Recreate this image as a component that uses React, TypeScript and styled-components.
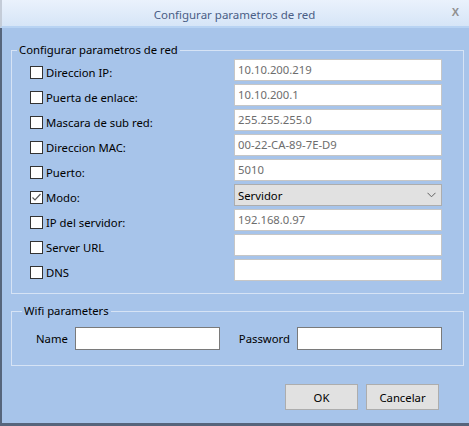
import React from "react";
import styled, { createGlobalStyle } from "styled-components";

const GlobalStyle = createGlobalStyle`
  html, body {
    margin: 0;
    padding: 0;
    background: #a7c4ea;
  }
  body {
    font-family: "Noto Sans", "Open Sans", sans-serif;
    font-size: 11.3px;
  }
`;

interface NetRow {
  label: string;
  value: string;
  checked?: boolean;
  select?: boolean;
}

const rows: NetRow[] = [
  { label: "Direccion IP:", value: "10.10.200.219" },
  { label: "Puerta de enlace:", value: "10.10.200.1" },
  { label: "Mascara de sub red:", value: "255.255.255.0" },
  { label: "Direccion MAC:", value: "00-22-CA-89-7E-D9" },
  { label: "Puerto:", value: "5010" },
  { label: "Modo:", value: "Servidor", checked: true, select: true },
  { label: "IP del servidor:", value: "192.168.0.97" },
  { label: "Server URL", value: "" },
  { label: "DNS", value: "" },
];

const CheckBox: React.FC<{ checked?: boolean }> = ({ checked }) => (
  <StyledCheck>
    {checked && (
      <svg width="11" height="11" viewBox="0 0 11 11">
        <polyline points="1.5,5.5 4,8 9.5,2" fill="none" stroke="#5a5a5a" strokeWidth="1.2" />
      </svg>
    )}
  </StyledCheck>
);

const App: React.FC = () => {
  return (
    <>
      <GlobalStyle />
      <StyledWindow>
        <StyledTitleBar>
          <StyledTitle>Configurar parametros de red</StyledTitle>
          <StyledClose>X</StyledClose>
        </StyledTitleBar>
        <StyledBody>
          <StyledGroup>
            <StyledLegend>Configurar parametros de red</StyledLegend>
            <StyledGrid>
              {rows.map((r) => (
                <React.Fragment key={r.label}>
                  <StyledOption>
                    <CheckBox checked={r.checked} />
                    <span>{r.label}</span>
                  </StyledOption>
                  {r.select ? (
                    <StyledSelect>
                      <span>{r.value}</span>
                      <svg width="9" height="6" viewBox="0 0 9 6">
                        <polyline points="0.5,0.8 4.5,4.8 8.5,0.8" fill="none" stroke="#606060" strokeWidth="1" />
                      </svg>
                    </StyledSelect>
                  ) : (
                    <StyledField>{r.value}</StyledField>
                  )}
                </React.Fragment>
              ))}
            </StyledGrid>
          </StyledGroup>

          <StyledWifiGroup>
            <StyledLegend>Wifi parameters</StyledLegend>
            <StyledWifiRow>
              <StyledWifiLabel>Name</StyledWifiLabel>
              <StyledWifiInput />
              <StyledWifiLabel $gap>Password</StyledWifiLabel>
              <StyledWifiInput />
            </StyledWifiRow>
          </StyledWifiGroup>

          <StyledButtons>
            <StyledButton>OK</StyledButton>
            <StyledButton>Cancelar</StyledButton>
          </StyledButtons>
        </StyledBody>
      </StyledWindow>
    </>
  );
};

const StyledWindow = styled.div`
  width: 469px;
  height: 426px;
  box-sizing: border-box;
  display: flex;
  flex-direction: column;
  background: #a7c4ea;
  border-bottom: 3px solid #56657c;
  overflow: hidden;
`;

const StyledTitleBar = styled.div`
  height: 26px;
  flex: none;
  display: flex;
  align-items: center;
  justify-content: center;
  position: relative;
  background: linear-gradient(#eaf2fc, #d6e5f7);
  border-left: 2px solid #c4ccd8;
  border-bottom: 2px solid #b8d3f3;
`;

const StyledTitle = styled.div`
  color: #4a5e86;
  font-size: 11.5px;
  margin-left: -2px;
  margin-top: 2px;
`;

const StyledClose = styled.div`
  position: absolute;
  right: 10px;
  top: 6px;
  color: #909090;
  font-family: "Liberation Sans", sans-serif;
  font-size: 11px;
  font-weight: bold;
`;

const StyledBody = styled.div`
  flex: 1;
  display: flex;
  flex-direction: column;
  border-left: 2px solid #56657c;
  padding: 14px 5px 0 9px;
`;

const StyledGroup = styled.fieldset`
  margin: 0;
  padding: 1px 21px 12px 19px;
  border: 1px solid #d6e3f5;
  min-width: 0;
`;

const StyledLegend = styled.legend`
  margin-left: -14px;
  padding: 0 2px;
  line-height: 16px;
  color: #000;
`;

const StyledGrid = styled.div`
  display: grid;
  grid-template-columns: 1fr 208px;
  row-gap: 3px;
`;

const StyledOption = styled.div`
  display: flex;
  align-items: center;
  gap: 3px;
  padding-top: 4px;
  margin-left: -1px;
  color: #000;
`;

const StyledCheck = styled.div`
  width: 11px;
  height: 11px;
  flex: none;
  border: 1px solid #333;
  background: #fff;
  display: flex;
`;

const StyledField = styled.div`
  height: 22px;
  box-sizing: border-box;
  border: 1px solid #c6c6c6;
  background: #fff;
  color: #6d6d6d;
  padding: 0 3px;
  line-height: 20px;
`;

const StyledSelect = styled.div`
  height: 22px;
  box-sizing: border-box;
  border: 1px solid #adadad;
  background: #e1e1e1;
  color: #000;
  padding: 0 5px 0 3px;
  display: flex;
  align-items: center;
  justify-content: space-between;
`;

const StyledWifiGroup = styled(StyledGroup)`
  margin-top: 9px;
  padding: 8px 10px 15px 24px;
`;

const StyledWifiRow = styled.div`
  display: flex;
  align-items: center;
`;

const StyledWifiLabel = styled.span<{ $gap?: boolean }>`
  margin-left: ${(p) => (p.$gap ? "19px" : "0")};
  margin-right: 7px;
  color: #000;
`;

const StyledWifiInput = styled.div`
  width: 145px;
  height: 23px;
  box-sizing: border-box;
  border: 1px solid #7a7a7a;
  background: #fff;
`;

const StyledButtons = styled.div`
  display: flex;
  justify-content: flex-end;
  gap: 8px;
  margin-top: 18px;
  padding-right: 25px;
`;

const StyledButton = styled.button`
  width: 73px;
  height: 26px;
  border: 1px solid #adadad;
  background: #e1e1e1;
  font-family: "Noto Sans", "Open Sans", sans-serif;
  font-size: 11.3px;
  color: #000;
  padding: 0;
`;

export default App;
